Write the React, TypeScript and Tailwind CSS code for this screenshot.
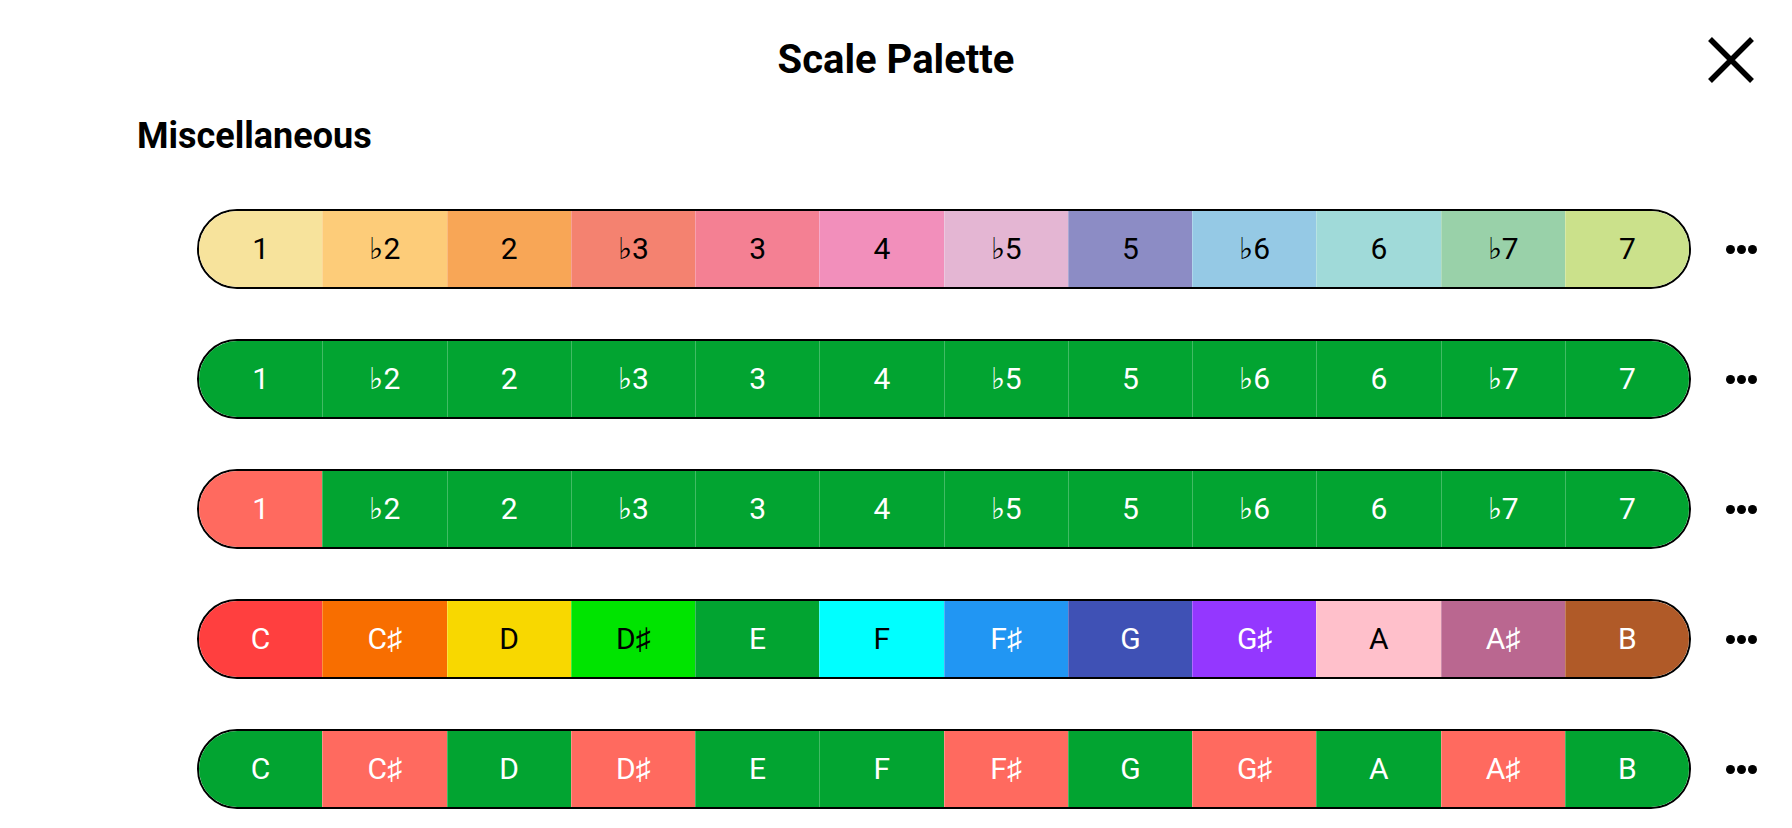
import React from 'react';

type Cell = { label: string; bg: string; text: string };

const GREEN = 'bg-[#02a431]';
const SALMON = 'bg-[#ff6a5f]';

// flat / sharp glyphs come from DejaVu, Roboto has none
function Note({ label }: { label: string }) {
  if (!/[♭♯]/.test(label)) return <>{label}</>;
  return (
    <>
      {label.split(/([♭♯])/).map((part, i) =>
        part === '♭' || part === '♯' ? (
          <span key={i} className="font-['DejaVu_Sans',sans-serif] text-[30px] font-extralight">
            {part}
          </span>
        ) : (
          <span key={i}>{part}</span>
        )
      )}
    </>
  );
}

const degrees = ['1', '♭2', '2', '♭3', '3', '4', '♭5', '5', '♭6', '6', '♭7', '7'];
const notes = ['C', 'C♯', 'D', 'D♯', 'E', 'F', 'F♯', 'G', 'G♯', 'A', 'A♯', 'B'];

const rainbow = [
  'bg-[#f7e39c]',
  'bg-[#fdcc79]',
  'bg-[#f8a656]',
  'bg-[#f48270]',
  'bg-[#f48093]',
  'bg-[#f28fbb]',
  'bg-[#e4b6d3]',
  'bg-[#8c8cc5]',
  'bg-[#95c9e5]',
  'bg-[#a0dad9]',
  'bg-[#99d1a9]',
  'bg-[#cbe18b]',
];

const chromatic: [string, string][] = [
  ['bg-[#ff3f3f]', 'text-white'],
  ['bg-[#f86e00]', 'text-white'],
  ['bg-[#f8d800]', 'text-black'],
  ['bg-[#00e400]', 'text-black'],
  ['bg-[#02a431]', 'text-white'],
  ['bg-[#00ffff]', 'text-black'],
  ['bg-[#2196f3]', 'text-white'],
  ['bg-[#3f51b5]', 'text-white'],
  ['bg-[#9437ff]', 'text-white'],
  ['bg-[#ffc0cb]', 'text-black'],
  ['bg-[#ba6790]', 'text-white'],
  ['bg-[#b05a28]', 'text-white'],
];

const rows: Cell[][] = [
  degrees.map((label, i) => ({ label, bg: rainbow[i], text: 'text-black' })),
  degrees.map((label) => ({ label, bg: GREEN, text: 'text-white' })),
  degrees.map((label, i) => ({ label, bg: i === 0 ? SALMON : GREEN, text: 'text-white' })),
  notes.map((label, i) => ({ label, bg: chromatic[i][0], text: chromatic[i][1] })),
  notes.map((label) => ({
    label,
    bg: label.includes('♯') ? SALMON : GREEN,
    text: 'text-white',
  })),
];

function ScaleBar({ cells }: { cells: Cell[] }) {
  return (
    <div className="flex items-center">
      <div className="flex h-[80px] w-[1494px] overflow-hidden rounded-full border-2 border-black">
        {cells.map((c, i) => (
          <div
            key={i}
            className={`flex flex-1 items-center justify-center text-[30px] leading-none ${c.bg} ${c.text} ${
              i > 0 ? 'border-l border-white/25' : ''
            }`}
          >
            <Note label={c.label} />
          </div>
        ))}
      </div>
      <button className="ml-[35px] flex items-center gap-[2px]">
        <span className="h-[9px] w-[9px] rounded-full bg-black" />
        <span className="h-[9px] w-[9px] rounded-full bg-black" />
        <span className="h-[9px] w-[9px] rounded-full bg-black" />
      </button>
    </div>
  );
}

export default function App() {
  return (
    <div className="h-[828px] w-full overflow-hidden bg-white font-['Roboto',sans-serif] text-black">
      <header className="relative flex justify-center pt-[36px]">
        <h1 className="text-[40px] font-bold leading-[48px]">Scale Palette</h1>
        <button className="absolute right-[36px] top-[35px]">
          <svg width="50" height="50" viewBox="0 0 50 50">
            <path d="M4 4L46 46M46 4L4 46" stroke="black" strokeWidth="5.5" fill="none" />
          </svg>
        </button>
      </header>
      <h2 className="pl-[137px] pt-[31px] text-[36px] font-bold leading-[42px]">Miscellaneous</h2>
      <div className="flex flex-col gap-[50px] pl-[197px] pt-[52px]">
        {rows.map((cells, i) => (
          <ScaleBar key={i} cells={cells} />
        ))}
      </div>
    </div>
  );
}
